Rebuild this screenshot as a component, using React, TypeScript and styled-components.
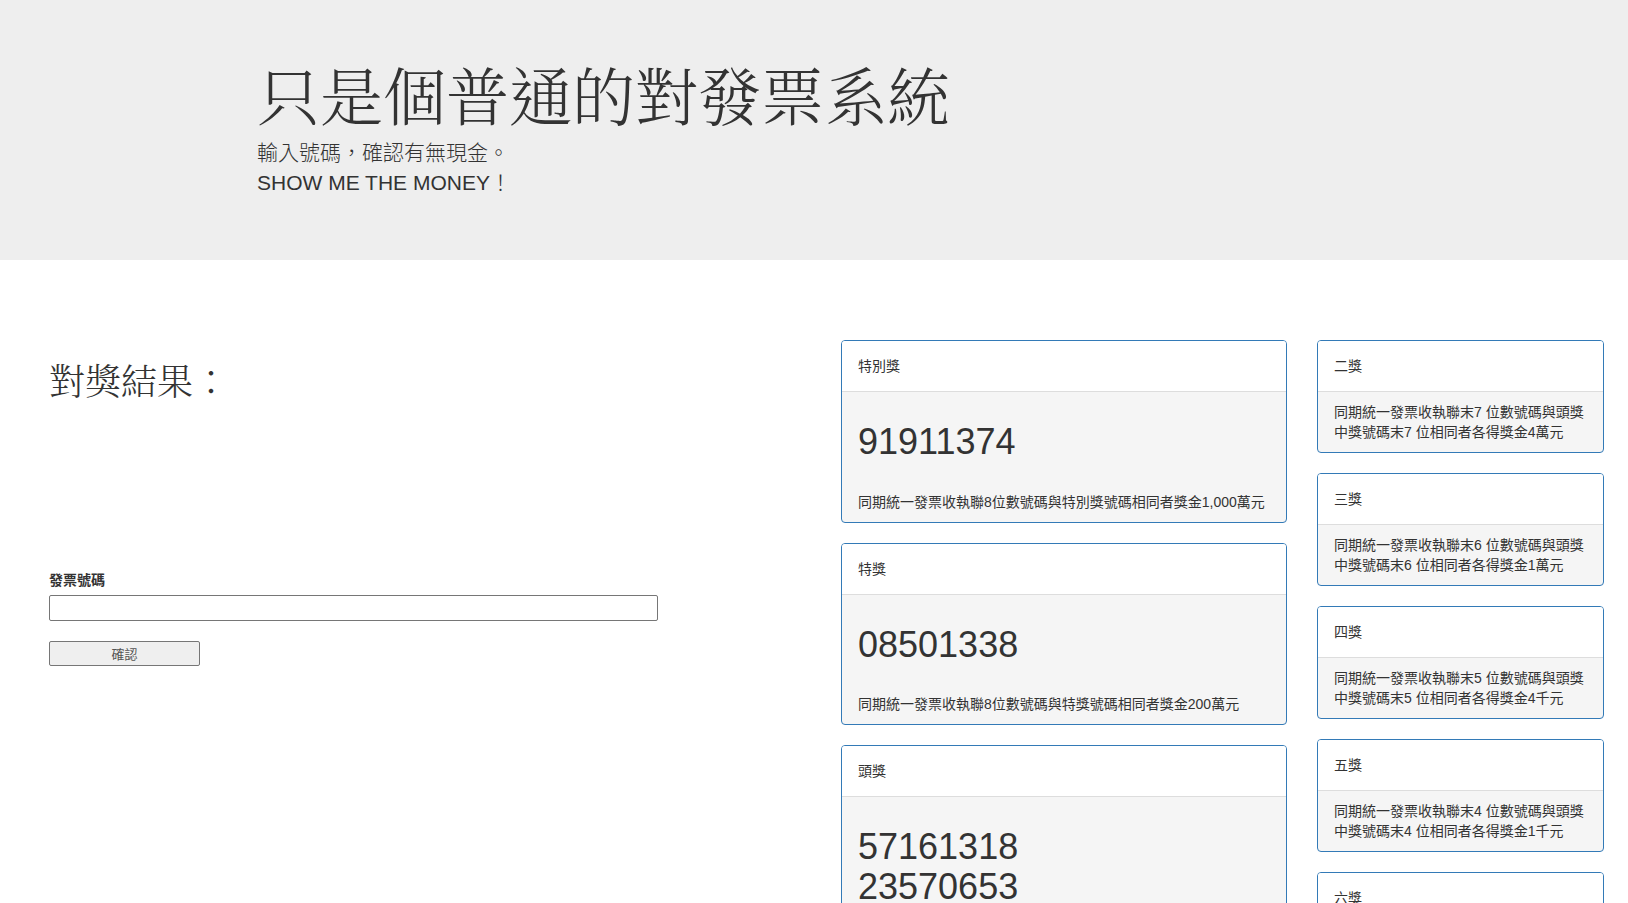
import React from "react";
import styled, { createGlobalStyle } from "styled-components";

const GlobalStyle = createGlobalStyle`
  html, body { margin: 0; padding: 0; background: #fff; }
  body {
    font-family: "Liberation Sans", "Noto Sans CJK TC", sans-serif;
    font-size: 14px;
    line-height: 1.42857;
    color: #333;
  }
  * { box-sizing: border-box; }
`;

const Jumbotron = styled.header`
  background: #eee;
  padding: 48px 0 48px 257px;
  height: 260px;
`;

const Title = styled.h1`
  margin: 10px 0 11px;
  font-family: "Noto Serif CJK TC", "Noto Sans CJK TC", serif;
  font-weight: 300;
  font-size: 63px;
  line-height: 1.1;
  color: #333;
`;

const Lead = styled.p`
  margin: 0 0 15px;
  font-size: 21px;
  line-height: 30px;
  font-weight: 200;
  color: #333;
`;

const Main = styled.main`
  display: flex;
  align-items: flex-start;
  padding: 80px 24px 0 49px;
`;

const LeftCol = styled.section`
  width: 609px;
  flex: none;
  margin-right: 183px;
  display: flex;
  flex-direction: column;
`;

const ResultTitle = styled.h2`
  margin: 20px 0 0;
  font-family: "Noto Serif CJK TC", "Noto Sans CJK TC", serif;
  font-weight: 300;
  font-size: 36px;
  line-height: 40px;
  color: #333;
`;

const ResultArea = styled.div`
  height: 170px;
`;

const FieldLabel = styled.label`
  display: block;
  font-weight: 700;
  font-size: 14px;
  line-height: 20px;
  margin-bottom: 5px;
`;

const TextInput = styled.input`
  display: block;
  width: 609px;
  height: 26px;
  border: 1px solid #767676;
  border-radius: 2px;
  background: #fff;
  padding: 1px 2px;
  font-size: 13px;
  font-family: "Liberation Sans", "Noto Sans CJK TC", sans-serif;
`;

const SubmitButton = styled.button`
  display: block;
  margin-top: 20px;
  width: 151px;
  height: 25px;
  border: 1px solid #767676;
  border-radius: 2px;
  background: #efefef;
  color: #555;
  font-size: 13px;
  font-family: "Liberation Sans", "Noto Sans CJK TC", sans-serif;
  padding: 0;
`;

const PrizeCol = styled.div<{ $w: number; $gap?: number }>`
  width: ${(p) => p.$w}px;
  flex: none;
  margin-right: ${(p) => p.$gap ?? 0}px;
  display: flex;
  flex-direction: column;
  gap: 20px;
`;

const Panel = styled.article`
  border: 1px solid #337ab7;
  border-radius: 4px;
  background: #f5f5f5;
  overflow: hidden;
`;

const PanelHeading = styled.div`
  background: #fff;
  border-bottom: 1px solid #ddd;
  padding: 15px 16px;
  font-size: 14px;
  line-height: 20px;
  color: #333;
`;

const PanelBody = styled.div`
  padding: 10px 16px;
`;

const Numbers = styled.div`
  margin: 20px 0 30px;
  font-size: 36px;
  line-height: 1.1;
  color: #333;
`;

const Desc = styled.p`
  margin: 0;
  font-size: 14px;
  line-height: 20px;
  color: #333;
`;

type Big = { title: string; numbers: string[]; desc: string };
type Small = { title: string; desc: string };

const bigPrizes: Big[] = [
  {
    title: "特別獎",
    numbers: ["91911374"],
    desc: "同期統一發票收執聯8位數號碼與特別獎號碼相同者獎金1,000萬元",
  },
  {
    title: "特獎",
    numbers: ["08501338"],
    desc: "同期統一發票收執聯8位數號碼與特獎號碼相同者獎金200萬元",
  },
  {
    title: "頭獎",
    numbers: ["57161318", "23570653", "99246766"],
    desc: "同期統一發票收執聯8位數號碼與頭獎號碼相同者獎金20萬元",
  },
];

const smallPrizes: Small[] = [
  { title: "二獎", desc: "同期統一發票收執聯末7 位數號碼與頭獎中獎號碼末7 位相同者各得獎金4萬元" },
  { title: "三獎", desc: "同期統一發票收執聯末6 位數號碼與頭獎中獎號碼末6 位相同者各得獎金1萬元" },
  { title: "四獎", desc: "同期統一發票收執聯末5 位數號碼與頭獎中獎號碼末5 位相同者各得獎金4千元" },
  { title: "五獎", desc: "同期統一發票收執聯末4 位數號碼與頭獎中獎號碼末4 位相同者各得獎金1千元" },
  { title: "六獎", desc: "同期統一發票收執聯末3 位數號碼與頭獎中獎號碼末3 位相同者各得獎金200元" },
];

export default function App() {
  return (
    <>
      <GlobalStyle />
      <Jumbotron>
        <Title>只是個普通的對發票系統</Title>
        <Lead>
          輸入號碼，確認有無現金。
          <br />
          SHOW ME THE MONEY！
        </Lead>
      </Jumbotron>
      <Main>
        <LeftCol>
          <ResultTitle>對獎結果：</ResultTitle>
          <ResultArea />
          <FieldLabel htmlFor="inv">發票號碼</FieldLabel>
          <TextInput id="inv" type="text" />
          <SubmitButton type="button">確認</SubmitButton>
        </LeftCol>
        <PrizeCol $w={446} $gap={30}>
          {bigPrizes.map((p) => (
            <Panel key={p.title}>
              <PanelHeading>{p.title}</PanelHeading>
              <PanelBody>
                <Numbers>
                  {p.numbers.map((n) => (
                    <div key={n}>{n}</div>
                  ))}
                </Numbers>
                <Desc>{p.desc}</Desc>
              </PanelBody>
            </Panel>
          ))}
        </PrizeCol>
        <PrizeCol $w={287}>
          {smallPrizes.map((p) => (
            <Panel key={p.title}>
              <PanelHeading>{p.title}</PanelHeading>
              <PanelBody>
                <Desc>{p.desc}</Desc>
              </PanelBody>
            </Panel>
          ))}
        </PrizeCol>
      </Main>
    </>
  );
}
